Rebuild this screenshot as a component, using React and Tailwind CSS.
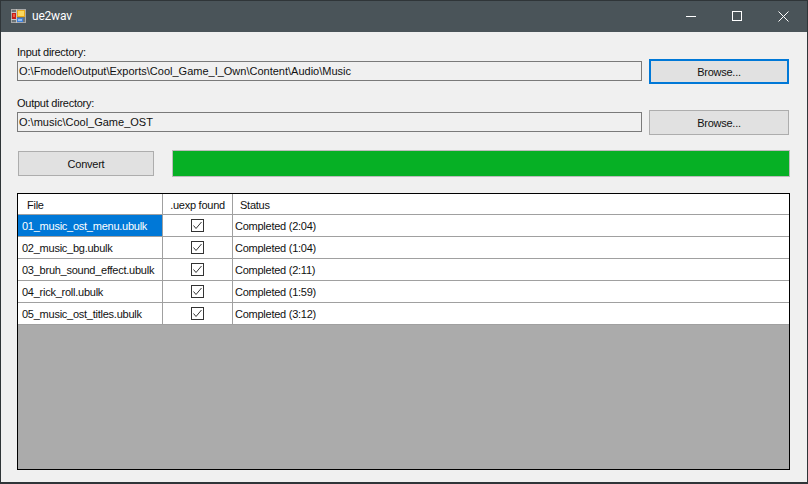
const files = [
  ["01_music_ost_menu.ubulk", "Completed (2:04)"],
  ["02_music_bg.ubulk", "Completed (1:04)"],
  ["03_bruh_sound_effect.ubulk", "Completed (2:11)"],
  ["04_rick_roll.ubulk", "Completed (1:59)"],
  ["05_music_ost_titles.ubulk", "Completed (3:12)"],
];

function AppIcon() {
  return (
    <svg width="16" height="16" viewBox="0 0 16 16" className="shrink-0" shapeRendering="crispEdges">
      <rect x="0.5" y="1.5" width="14" height="13" fill="#6b7478" stroke="#a8a8a8" />
      <path d="M5.5 1 V15 M0 4.5 H6 M0 11.5 H6" stroke="#c4c4c4" fill="none" />
      <rect x="6" y="2" width="8" height="7" fill="#e8a818" />
      <rect x="7" y="3" width="6" height="5" fill="#fbd85e" />
      <rect x="1" y="5" width="4" height="6" fill="#c41e1a" />
      <rect x="2" y="6" width="2" height="3" fill="#ee5a3c" />
      <rect x="6" y="10" width="6" height="4" fill="#3f7fd8" />
      <rect x="7" y="11" width="4" height="2" fill="#8fbcf2" />
    </svg>
  );
}

function TextBox({ value }) {
  return (
    <div className="flex-1 h-5 mt-[2px] border border-[#7a7a7a] bg-[#f0f0f0] pl-px flex items-center text-[11px] tracking-normal text-[#111] whitespace-nowrap">
      {value}
    </div>
  );
}

function Check() {
  return (
    <svg width="13" height="13" viewBox="0 0 13 13">
      <rect x="0.5" y="0.5" width="12" height="12" fill="#fff" stroke="#333" />
      <path d="M2.5 6.5 L5 9.5 L10.5 3" fill="none" stroke="#333" strokeWidth="1" />
    </svg>
  );
}

export default function App() {
  return (
    <div className="w-[808px] h-[484px] flex flex-col overflow-hidden bg-[#f0f0f0] border-x border-b-2 border-[#2f3538] font-['Liberation_Sans',sans-serif] text-[11px] tracking-[-0.25px] text-[#111]">
      <div className="h-8 shrink-0 bg-[#4a5459] border-t border-[#2f3538] pb-px flex items-center text-white">
        <div className="ml-[10px] mr-[5px]"><AppIcon /></div>
        <span className="text-[12px] tracking-[-0.2px] font-['Roboto',sans-serif]">ue2wav</span>
        <div className="ml-auto mr-px flex items-center h-full">
          <div className="w-[46px] h-full flex items-center justify-center">
            <div className="w-[10px] h-px bg-white" />
          </div>
          <div className="w-[46px] h-full flex items-center justify-center">
            <div className="w-[10px] h-[10px] border border-white" />
          </div>
          <div className="w-[46px] h-full flex items-center justify-center">
            <svg width="11" height="11" viewBox="0 0 11 11"><path d="M0.5 0.5 L10.5 10.5 M10.5 0.5 L0.5 10.5" stroke="#fff" strokeWidth="1" /></svg>
          </div>
        </div>
      </div>

      <div className="flex-1 flex flex-col pl-4 pr-[17px] pt-[13px]">
        <div className="h-[15px] leading-[15px]">Input directory:</div>
        <div className="flex items-start gap-[7px] h-[25px] mt-[-1px] mr-px">
          <TextBox value="O:\Fmodel\Output\Exports\Cool_Game_I_Own\Content\Audio\Music" />
          <div className="w-[140px] h-[25px] border-2 border-[#0078d7] bg-[#e1e1e1] pt-[2px] flex items-center justify-center">Browse...</div>
        </div>
        <div className="h-[15px] leading-[15px] mt-[12px]">Output directory:</div>
        <div className="flex items-start gap-[7px] h-[25px] mt-[-1px] mr-px">
          <TextBox value="O:\music\Cool_Game_OST" />
          <div className="w-[140px] h-[25px] border border-[#adadad] bg-[#e1e1e1] pt-[2px] flex items-center justify-center">Browse...</div>
        </div>
        <div className="flex items-center mt-[15px] h-[27px]">
          <div className="ml-px w-[136px] h-[25px] border border-[#adadad] bg-[#e1e1e1] pt-[2px] flex items-center justify-center">Convert</div>
          <div className="ml-[18px] flex-1 h-[27px] border border-[#bcbcbc] bg-[#06b025]" />
        </div>
        <div className="mt-4 h-[277px] border border-black bg-[#ababab] flex flex-col">
          <div className="h-[21px] bg-white border-b border-[#a0a0a0] flex">
            <div className="w-[145px] border-r border-[#a0a0a0] pl-[9px] pt-[2px] flex items-center">File</div>
            <div className="w-[70px] border-r border-[#a0a0a0] pt-[2px] flex items-center justify-center">.uexp found</div>
            <div className="flex-1 pl-[7px] pt-[2px] flex items-center">Status</div>
          </div>
          {files.map(([name, status], i) => (
            <div key={name} className="h-[22px] bg-white border-b border-[#a0a0a0] flex">
              <div className={i === 0
                ? "w-[145px] border-r border-[#a0a0a0] pl-[4px] pt-[2px] flex items-center bg-[#0078d7] text-white"
                : "w-[145px] border-r border-[#a0a0a0] pl-[4px] pt-[2px] flex items-center"}>{name}</div>
              <div className="w-[70px] border-r border-[#a0a0a0] flex items-center justify-center"><Check /></div>
              <div className="flex-1 pl-[2px] pt-[2px] flex items-center">{status}</div>
            </div>
          ))}
        </div>
      </div>
    </div>
  );
}
